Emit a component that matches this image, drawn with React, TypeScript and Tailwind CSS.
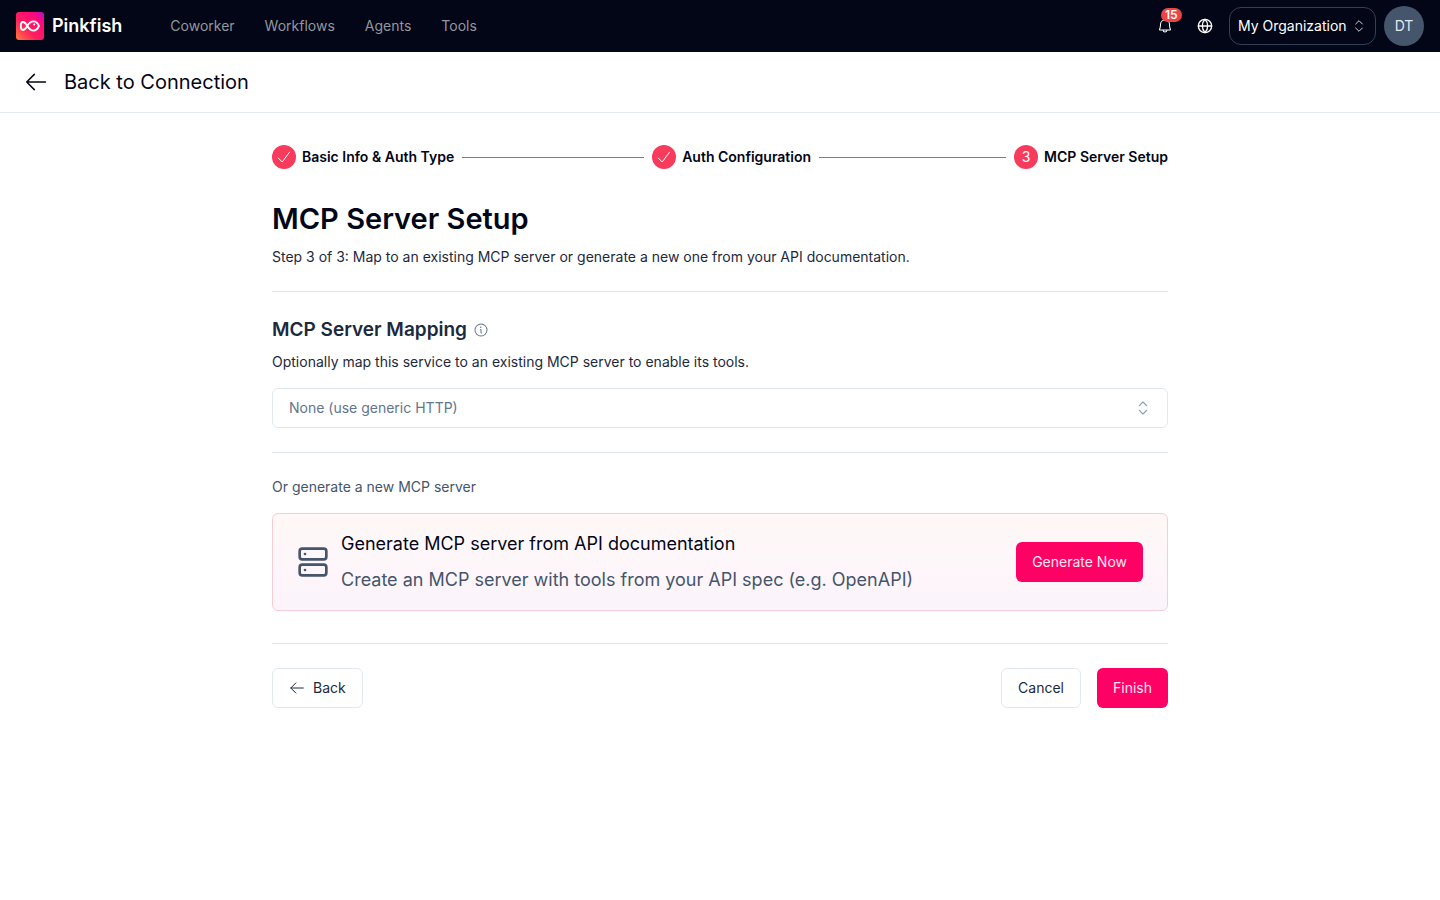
import type { ReactNode } from 'react';
import { ChevronsUpDown, Globe, Server } from 'lucide-react';
import { PiBell, PiInfo } from 'react-icons/pi';

const navItems = ['Coworker', 'Workflows', 'Agents', 'Tools'];

const steps = [
  { label: 'Basic Info & Auth Type', done: true },
  { label: 'Auth Configuration', done: true },
  { label: 'MCP Server Setup', done: false },
];

function Logo() {
  return (
    <svg viewBox="0 0 28 28" className="size-7" aria-hidden="true">
      <defs>
        <linearGradient id="logo-bg" x1="0" y1="1" x2="1" y2="0">
          <stop offset="0" stopColor="#ff7a3d" />
          <stop offset="0.4" stopColor="#ff1f5e" />
          <stop offset="0.75" stopColor="#ff0a78" />
          <stop offset="1" stopColor="#b012c8" />
        </linearGradient>
      </defs>
      <rect width="28" height="28" rx="3" fill="url(#logo-bg)" />
      <path
        d="M11.3 14C9.6 11 8.2 10 6.9 10 5.2 10 4.8 12 4.8 14s.4 4 2.1 4c1.3 0 2.7-1 4.4-4C13 11 15 9.4 17.6 9.4c2.4 0 4.2 2.1 5.4 4.6-1.2 2.5-3 4.6-5.4 4.6-2.6 0-4.6-1.6-6.3-4.6Z"
        fill="none"
        stroke="#fff"
        strokeWidth="1.8"
        strokeLinejoin="round"
      />
      <circle cx="18.2" cy="12.6" r="1" fill="#fff" />
    </svg>
  );
}

function ArrowLeft({ className }: { className: string }) {
  return (
    <svg
      viewBox="0 0 24 24"
      className={className}
      fill="none"
      stroke="currentColor"
      strokeWidth="1.5"
      strokeLinecap="round"
      strokeLinejoin="round"
      aria-hidden="true"
    >
      <path d="M21.5 12H2.7M10.3 4.4 2.7 12l7.6 7.6" />
    </svg>
  );
}

function Check() {
  return (
    <svg viewBox="0 0 14 14" className="size-3.5" fill="none" stroke="currentColor" strokeLinecap="round" strokeLinejoin="round" aria-hidden="true">
      <path d="M1.3 8 5.2 12 12.5 2.2" />
    </svg>
  );
}

function TopBar() {
  return (
    <header className="flex h-13 items-center bg-[#020617] px-4">
      <a href="#" className="flex items-center gap-2 text-lg font-semibold text-white">
        <Logo />
        Pinkfish
      </a>
      <nav className="ml-12 flex flex-1 items-center gap-[30px] text-sm text-[#94979e]">
        {navItems.map((item) => (
          <a key={item} href="#">
            {item}
          </a>
        ))}
      </nav>
      <div className="flex items-center gap-2 text-sm text-white">
        <button type="button" aria-label="Notifications" className="relative flex size-8 items-center justify-center">
          <PiBell size={16} />
          <span className="absolute -top-0.5 left-3 rounded-full bg-[#ef4444] px-1 text-xs leading-[14px] font-semibold">15</span>
        </button>
        <button type="button" aria-label="Language" className="flex size-8 items-center justify-center">
          <Globe size={16} strokeWidth={2} />
        </button>
        <button
          type="button"
          className="flex h-[38px] w-[147px] items-center justify-between rounded-xl border border-slate-700 px-2 whitespace-nowrap"
        >
          My Organization
          <ChevronsUpDown size={16} strokeWidth={1.5} className="text-slate-300" />
        </button>
        <button type="button" className="flex size-10 items-center justify-center rounded-full bg-slate-600 text-slate-200">
          DT
        </button>
      </div>
    </header>
  );
}

function Stepper() {
  return (
    <ol className="flex items-center text-sm font-semibold text-[#020617]">
      {steps.map((step, index) => (
        <li key={step.label} className={index > 0 ? 'flex flex-1 items-center' : 'flex items-center'}>
          {index > 0 && <span className="mx-2 flex-1 border-t border-[#f0475f]" />}
          <span className="flex size-6 items-center justify-center rounded-full bg-[#f73b5c] font-normal text-white">
            {step.done ? <Check /> : index + 1}
          </span>
          <span className="ml-1.5">{step.label}</span>
        </li>
      ))}
    </ol>
  );
}

function PrimaryButton({ children }: { children: ReactNode }) {
  return (
    <button type="button" className="h-10 rounded-md bg-[#ff0065] px-4 text-sm text-pink-100">
      {children}
    </button>
  );
}

export default function App() {
  return (
    <div className="min-h-screen bg-white font-['Inter',sans-serif] text-[#020617]">
      <TopBar />
      <div className="flex h-[61px] items-center border-b border-slate-200 px-6">
        <a href="#" className="flex items-center gap-4 text-xl">
          <ArrowLeft className="size-6" />
          Back to Connection
        </a>
      </div>

      <main className="mx-auto max-w-4xl pt-8">
        <Stepper />

        <h1 className="mt-8 text-[29px] leading-9 font-semibold">MCP Server Setup</h1>
        <p className="mt-2.5 text-sm text-slate-800">
          Step 3 of 3: Map to an existing MCP server or generate a new one from your API documentation.
        </p>

        <section className="mt-6 border-t border-slate-200 pt-6">
          <div className="flex items-center gap-1.5">
            <h2 className="text-[19px] leading-7 font-semibold text-slate-800">MCP Server Mapping</h2>
            <PiInfo size={16} className="text-slate-500" />
          </div>
          <label htmlFor="mcp-server" className="mt-2 block text-sm text-slate-800">
            Optionally map this service to an existing MCP server to enable its tools.
          </label>
          <div className="mt-4 grid items-center">
            <select
              id="mcp-server"
              className="col-start-1 row-start-1 h-10 w-full appearance-none rounded-md border border-slate-200 bg-white px-4 text-sm text-slate-500"
            >
              <option>None (use generic HTTP)</option>
            </select>
            <ChevronsUpDown
              size={18}
              strokeWidth={1.5}
              className="pointer-events-none col-start-1 row-start-1 mr-4 justify-self-end text-slate-400"
            />
          </div>
        </section>

        <section className="mt-6 border-t border-slate-200 pt-6">
          <p className="text-sm text-slate-600">Or generate a new MCP server</p>
          <div className="mt-4 flex items-center rounded-md border border-[#f9ccd5] bg-linear-to-b from-[#fff8f6] to-[#fcf4fc] px-6 py-3">
            <Server size={32} className="text-slate-600" />
            <div className="ml-3 flex-1 text-lg leading-9">
              <h3>Generate MCP server from API documentation</h3>
              <p className="text-slate-600">Create an MCP server with tools from your API spec (e.g. OpenAPI)</p>
            </div>
            <PrimaryButton>Generate Now</PrimaryButton>
          </div>
        </section>

        <footer className="mt-8 flex items-center gap-4 border-t border-slate-200 pt-6 text-sm text-slate-800">
          <button type="button" className="mr-auto flex h-10 items-center gap-2 rounded-md border border-slate-200 px-4">
            <ArrowLeft className="size-4" />
            Back
          </button>
          <button type="button" className="h-10 rounded-md border border-slate-200 px-4">
            Cancel
          </button>
          <PrimaryButton>Finish</PrimaryButton>
        </footer>
      </main>
    </div>
  );
}
